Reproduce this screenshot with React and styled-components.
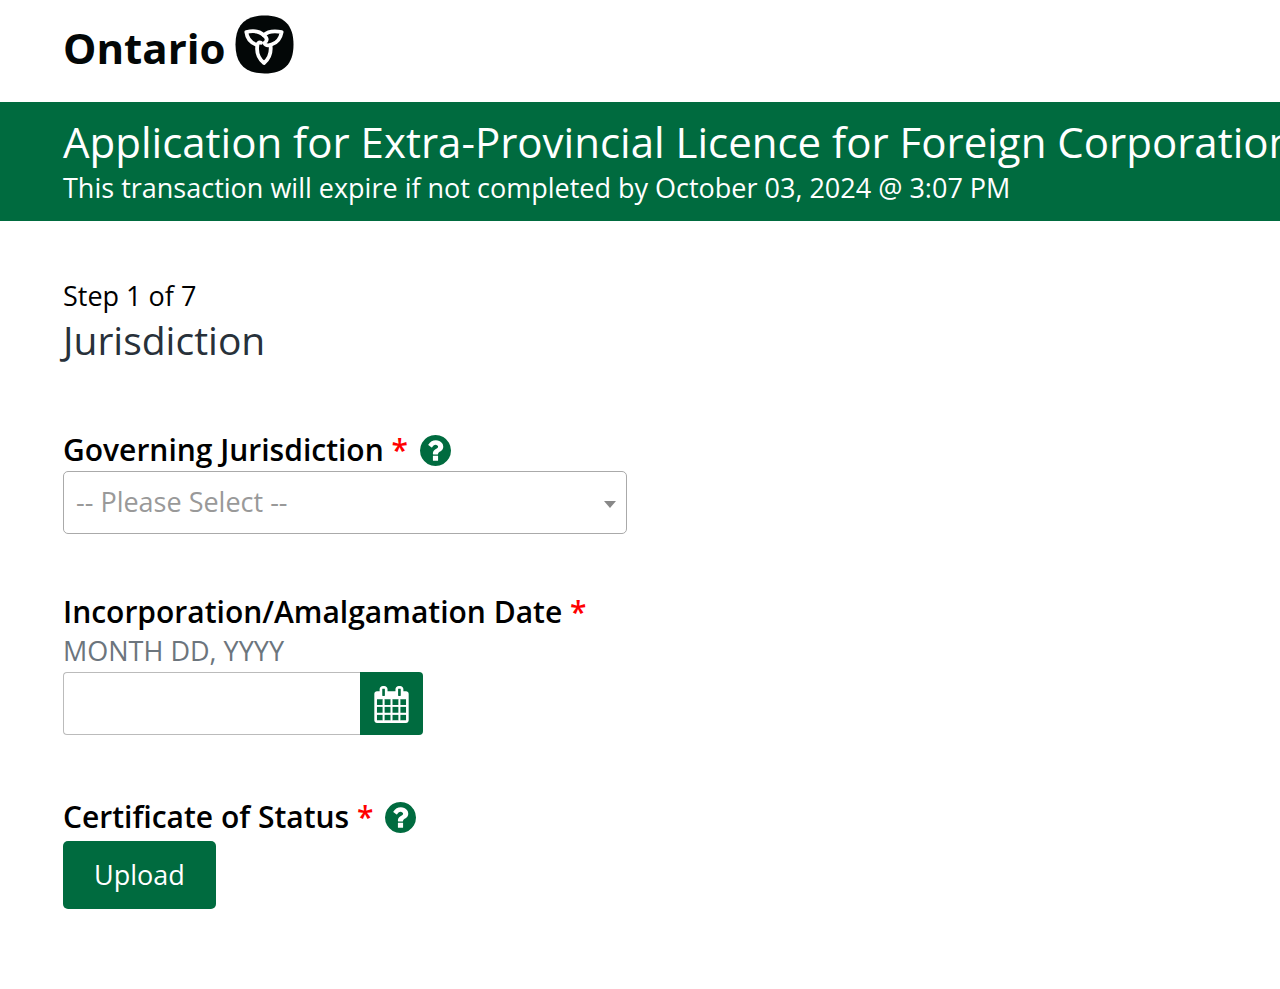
import React from "react";
import styled, { createGlobalStyle } from "styled-components";

const green = "#006b3f";

const GlobalStyle = createGlobalStyle`
  *, *::before, *::after { box-sizing: border-box; }
  body {
    margin: 0;
    overflow-x: hidden;
    background: #fff;
    color: #000;
    font-family: "Open Sans", "Noto Sans", sans-serif;
    font-size: 27px;
    line-height: 36px;
  }
  button, input, select { font: inherit; }
`;

const Header = styled.header`
  padding: 15px 63px 28px;
`;

const Logo = styled.a`
  display: flex;
  align-items: center;
  gap: 9px;
  color: #030707;
  text-decoration: none;
`;

const Wordmark = styled.span`
  padding-top: 6px;
  font-size: 42px;
  font-weight: 700;
  line-height: 52px;
`;

const Banner = styled.div`
  padding: 12px 63px 15px;
  background: ${green};
  color: #fff;
  white-space: nowrap;
  overflow: hidden;
`;

const Title = styled.h1`
  margin: 0;
  font-size: 42px;
  font-weight: 400;
  line-height: 56px;
`;

const Text = styled.p`
  margin: 0;
`;

const Main = styled.main`
  padding: 57px 63px;
`;

const StepTitle = styled.h2`
  margin: 0 0 64px;
  color: #28313a;
  font-size: 39px;
  font-weight: 400;
  line-height: 52px;
`;

const Field = styled.div`
  margin-bottom: ${(p) => p.$space || 58}px;
`;

const LabelRow = styled.div`
  display: flex;
  align-items: center;
  gap: 12px;
  margin-bottom: ${(p) => p.$gap || 1}px;
`;

const Label = styled.label`
  font-family: "Open Sans", sans-serif;
  font-size: 30px;
  font-weight: 600;
  line-height: 40px;
  -webkit-text-stroke: 0px currentColor;
`;

const Required = styled.span`
  color: #f00;
`;

const HelpButton = styled.button`
  display: flex;
  padding: 0;
  border: 0;
  border-radius: 50%;
  background: none;
  color: ${green};
  cursor: pointer;
`;

const SelectBox = styled.div`
  display: grid;
  align-items: center;
  max-width: 564px;
  > * { grid-area: 1 / 1; }
`;

const Select = styled.select`
  width: 100%;
  height: 63px;
  padding: 0 40px 2px 12px;
  appearance: none;
  border: 1px solid #aaa;
  border-radius: 5px;
  background: #fff;
  color: #999;
`;

const Arrow = styled.span`
  justify-self: end;
  margin: 3px 11px 0 0;
  border: 6px solid transparent;
  border-top: 7px solid #888;
  border-bottom: 0;
  pointer-events: none;
`;

const Hint = styled.p`
  margin: 0 0 3px;
  color: #6c757d;
`;

const DateGroup = styled.div`
  display: flex;
  max-width: 360px;
  height: 63px;
`;

const DateInput = styled.input`
  flex: 1;
  min-width: 0;
  padding: 0 12px;
  border: 1px solid #bbb;
  border-right: 0;
  border-radius: 4px 0 0 4px;
`;

const CalendarButton = styled.button`
  display: flex;
  align-items: center;
  justify-content: center;
  width: 63px;
  padding: 2px 0 0;
  border: 0;
  border-radius: 0 4px 4px 0;
  background: ${green};
  color: #fff;
  cursor: pointer;
`;

const UploadButton = styled.button`
  height: 68px;
  padding: 0 31px;
  border: 0;
  border-radius: 5px;
  background: ${green};
  color: #fff;
  cursor: pointer;
`;

function Trillium() {
  return (
    <svg width="59" height="59" viewBox="0 0 59 59" aria-hidden="true">
      <path
        fill="currentColor"
        d="M29.500 .5C49 .5 58.500 10 58.500 29.500S49 58.500 29.500 58.500.5 49 .5 29.500 10 .5 29.500 .5z"
      />
      <g fill="none" stroke="#fff" strokeWidth="3.800" strokeLinejoin="round" strokeLinecap="round">
        <path d="M22 30C16 28 12 23 11.300 17C18 15.500 25 16.500 28.700 20.200C31.300 22 32.300 24 31.200 26" />
        <path d="M28.700 20.200C32.500 16.500 39 15.500 46.700 17C45.500 23.500 42 28 36.500 29.500C33.500 30.700 30.500 30.500 29.300 28" />
        <path d="M35.500 30.500C36.500 38 34.300 43.500 29 48C23.500 43.500 21.500 37 22.300 31C22.300 28 24 27 26 27.800" />
      </g>
    </svg>
  );
}

function QuestionIcon() {
  return (
    <svg width="31" height="31" viewBox="128 128 1536 1536" fill="currentColor" aria-hidden="true">
      <path d="M1024 1376v-192q0-14-9-23t-23-9h-192q-14 0-23 9t-9 23v192q0 14 9 23t23 9h192q14 0 23-9t9-23zM1280 704q0-88-55.500-163t-138.500-116-170-41q-243 0-371 213-15 24 8 42l132 100q7 6 19 6 16 0 25-12 53-68 86-92 34-24 86-24 48 0 85.500 26t37.500 59q0 38-20 61t-68 45q-63 28-115.500 86.500t-52.500 125.500v36q0 14 9 23t23 9h192q14 0 23-9t9-23q0-19 21.500-49.500t54.500-49.500q32-18 49-28.500t46-35 44.500-48 28-60.500 12.500-81zM1664 896q0 209-103 385.500t-279.500 279.500-385.500 103-385.500-103-279.500-279.500-103-385.500 103-385.500 279.500-279.500 385.500-103 385.500 103 279.500 279.500 103 385.500z" />
    </svg>
  );
}

function CalendarIcon() {
  return (
    <svg width="35" height="37" viewBox="0 0 1664 1792" fill="currentColor" aria-hidden="true">
      <path d="M128 1664h288v-288h-288v288zM480 1664h320v-288h-320v288zM128 1312h288v-320h-288v320zM480 1312h320v-320h-320v320zM128 928h288v-288h-288v288zM864 1664h320v-288h-320v288zM480 928h320v-288h-320v288zM1248 1664h288v-288h-288v288zM864 1312h320v-320h-320v320zM512 448v-288q0-13-9.500-22.500t-22.500-9.500h-64q-13 0-22.500 9.500t-9.500 22.500v288q0 13 9.500 22.500t22.500 9.500h64q13 0 22.500-9.500t9.500-22.500zM1248 1312h288v-320h-288v320zM864 928h320v-288h-320v288zM1248 928h288v-288h-288v288zM1280 448v-288q0-13-9.500-22.500t-22.500-9.500h-64q-13 0-22.500 9.500t-9.500 22.500v288q0 13 9.500 22.500t22.500 9.500h64q13 0 22.500-9.500t9.500-22.500zM1664 384v1280q0 52-38 90t-90 38h-1408q-52 0-90-38t-38-90v-1280q0-52 38-90t90-38h128v-96q0-66 47-113t113-47h64q66 0 113 47t47 113v96h384v-96q0-66 47-113t113-47h64q66 0 113 47t47 113v96h128q52 0 90 38t38 90z" />
      <path
        fill="none"
        stroke="currentColor"
        strokeWidth="90"
        d="M448 640v1024M832 640v1024M1216 640v1024M128 960h1408M128 1344h1408"
      />
    </svg>
  );
}

function FieldLabel({ htmlFor, text, help, gap }) {
  return (
    <LabelRow $gap={gap}>
      <Label htmlFor={htmlFor}>
        {text} <Required>*</Required>
      </Label>
      {help && (
        <HelpButton type="button" aria-label={`Help: ${text}`}>
          <QuestionIcon />
        </HelpButton>
      )}
    </LabelRow>
  );
}

export default function App() {
  return (
    <>
      <GlobalStyle />
      <Header>
        <Logo href="#">
          <Wordmark>Ontario</Wordmark>
          <Trillium />
        </Logo>
      </Header>
      <Banner>
        <Title>Application for Extra-Provincial Licence for Foreign Corporation</Title>
        <Text>This transaction will expire if not completed by October 03, 2024 @ 3:07 PM</Text>
      </Banner>
      <Main>
        <Text>Step 1 of 7</Text>
        <StepTitle>Jurisdiction</StepTitle>
        <Field>
          <FieldLabel htmlFor="jurisdiction" text="Governing Jurisdiction" help />
          <SelectBox>
            <Select id="jurisdiction" defaultValue="">
              <option value="">-- Please Select --</option>
            </Select>
            <Arrow />
          </SelectBox>
        </Field>
        <Field $space={62}>
          <FieldLabel htmlFor="date" text="Incorporation/Amalgamation Date" />
          <Hint id="date-hint">MONTH DD, YYYY</Hint>
          <DateGroup>
            <DateInput id="date" type="text" aria-describedby="date-hint" />
            <CalendarButton type="button" aria-label="Choose date">
              <CalendarIcon />
            </CalendarButton>
          </DateGroup>
        </Field>
        <Field>
          <FieldLabel htmlFor="certificate" text="Certificate of Status" help gap={4} />
          <UploadButton id="certificate" type="button">Upload</UploadButton>
        </Field>
      </Main>
    </>
  );
}
